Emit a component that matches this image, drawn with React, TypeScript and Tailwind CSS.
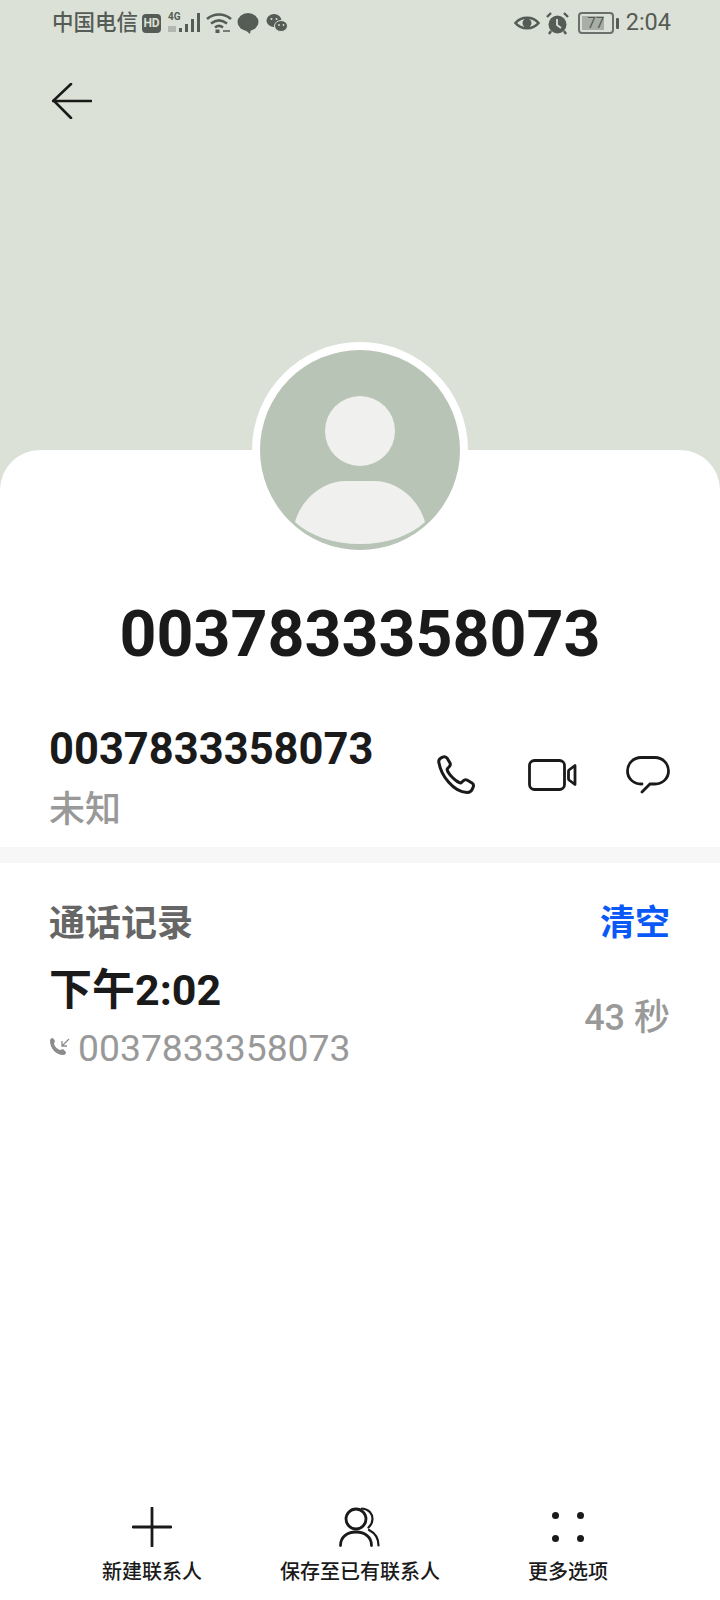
const sans = "font-['Roboto','Noto_Sans_CJK_SC',sans-serif]";

function StatusBar() {
  return (
    <div className="flex h-[46px] items-center justify-between pl-[52px] pr-[49px] text-[#555b55]">
      <div className="flex items-center">
        <span className="text-[21.5px] font-medium leading-none">中国电信</span>
        {/* HD badge */}
        <span className="ml-[4px] flex h-[19px] w-[19px] items-center justify-center rounded-[4px] bg-[#555b55] text-[12px] font-bold leading-none text-[#dbe1d7]">
          HD
        </span>
        {/* 4G signal */}
        <svg className="ml-[7px]" width="33" height="24" viewBox="0 0 33 24" fill="#555b55">
          <text x="0" y="9" fontSize="10" fontWeight="700" fontFamily="Roboto">4G</text>
          <rect x="0" y="15" width="8" height="6" opacity="0.3" />
          <rect x="11" y="17" width="3" height="4" />
          <rect x="17" y="13" width="3" height="8" />
          <rect x="23" y="8" width="3" height="13" />
          <rect x="29" y="2" width="3" height="19" />
        </svg>
        {/* wifi */}
        <svg className="ml-[5px]" width="26" height="22" viewBox="0 0 26 22" fill="none" stroke="#555b55" strokeWidth="2.600">
          <path d="M1 7c7-6 17-6 24 0" />
          <path d="M5 11.500c5-4 11-4 16 0" />
          <path d="M9 15.500c2.500-2 5.500-2 8 0" />
          <rect x="9.500" y="17.500" width="4" height="3.500" fill="#555b55" stroke="none" />
          <path d="M17 19h7" strokeWidth="1.500" />
        </svg>
        {/* message bubble */}
        <svg className="ml-[5px]" width="22" height="22" viewBox="0 0 22 22" fill="#555b55">
          <ellipse cx="11" cy="10" rx="10.500" ry="9" />
          <path d="M7 17l6 5 1-6z" />
        </svg>
        {/* wechat */}
        <svg className="ml-[7px]" width="22" height="20" viewBox="0 0 22 20" fill="#555b55">
          <ellipse cx="8" cy="7.500" rx="7.500" ry="6.500" />
          <ellipse cx="15" cy="13" rx="6.500" ry="5.500" stroke="#dbe1d7" strokeWidth="1" />
          <circle cx="5.500" cy="6" r="1" fill="#dbe1d7" />
          <circle cx="10.500" cy="6" r="1" fill="#dbe1d7" />
          <circle cx="13" cy="12" r="0.900" fill="#dbe1d7" />
          <circle cx="17.500" cy="12" r="0.900" fill="#dbe1d7" />
        </svg>
      </div>
      <div className="flex items-center">
        {/* eye */}
        <svg width="26" height="18" viewBox="0 0 26 18" fill="none" stroke="#555b55" strokeWidth="2.600">
          <path d="M1.500 9C7 2 19 2 24.500 9 19 16 7 16 1.500 9z" />
          <circle cx="13" cy="9" r="4.500" fill="#555b55" stroke="none" />
        </svg>
        {/* alarm */}
        <svg className="ml-[6px]" width="23" height="23" viewBox="0 0 23 23" fill="#555b55">
          <circle cx="11.500" cy="12.500" r="9" />
          <path d="M1 5l4-4M22 5l-4-4" stroke="#555b55" strokeWidth="2.400" />
          <path d="M3 22l2-3M20 22l-2-3" stroke="#555b55" strokeWidth="2.400" />
          <path d="M11 7v6l4 3" fill="none" stroke="#dbe1d7" strokeWidth="1.800" />
        </svg>
        {/* battery */}
        <div className="relative ml-[9px] flex h-[22px] w-[36px] items-center rounded-[4px] border-2 border-[#6b706a] p-[2px]">
          <div className="h-full w-[22px] bg-[#a9aea6]" />
          <span className="absolute inset-0 flex items-center justify-center text-[15px] leading-none text-[#555b55]">
            77
          </span>
        </div>
        <div className="ml-[2px] h-[11px] w-[3px] rounded-[1px] bg-[#555b55]" />
        <span className="ml-[7px] text-[23.5px] leading-none">2:04</span>
      </div>
    </div>
  );
}

export default function App() {
  return (
    <div className={`${sans} flex h-[1600px] w-[720px] flex-col overflow-hidden bg-white`}>
      {/* Header band */}
      <div className="h-[488px] shrink-0 bg-[#dbe1d7]">
        <StatusBar />
        <button className="ml-[52px] mt-[37px] block">
          <svg width="40" height="36" viewBox="0 0 40 36" fill="none" stroke="#1a1a1a" strokeWidth="2.600" strokeLinecap="round">
            <path d="M1 18h38" />
            <path d="M19 1L1.500 17.500 19 35" />
          </svg>
        </button>
      </div>

      {/* White sheet */}
      <div className="-mt-[38px] flex flex-1 flex-col rounded-t-[40px] bg-white">
        <div className="-mt-[108px] flex justify-center">
          <div className="flex h-[216px] w-[216px] items-center justify-center rounded-full bg-white">
            <svg width="200" height="200" viewBox="0 0 200 200">
              <circle cx="100" cy="100" r="100" fill="#b8c4b5" />
              <circle cx="100" cy="81" r="35" fill="#f0f1ef" />
              <path d="M35 172c7-25 30-41 50-41h30c20 0 43 16 50 41-15 14-38 22-65 22s-50-8-65-22z" fill="#f0f1ef" />
            </svg>
          </div>
        </div>

        <h1 className="mt-[36px] text-center text-[64.500px] font-bold leading-[80px] text-[#1a1a1a]">
          0037833358073
        </h1>

        {/* Number row */}
        <div className="mt-[50px] flex items-start justify-between pl-[49px] pr-[50px]">
          <div>
            <div className="text-[43.5px] font-bold leading-[52px] text-[#1a1a1a]">0037833358073</div>
            <div className="mt-[12px] text-[36px] font-medium leading-[44px] text-[#999999]">未知</div>
          </div>
          <div className="mt-[30px] flex items-center">
            <svg width="42" height="42" viewBox="0 0 42 42" fill="none" stroke="#1a1a1a" strokeWidth="3" strokeLinejoin="round">
              <path d="M3 9c-1-3 1-5 4-6 2-1 3 0 4 1l3 5c1 2 0 3-1 4l-1.500 1.500c-1 1 1 5 5 9s8 6 9 5l1.500-1.500c1-1 2-2 4-1l5 3c1.500 1 2 2.500 1 4.500-1 3-3 5-6 5C17 38 5 21 3 9z" />
            </svg>
            <svg className="ml-[50px]" width="49" height="32" viewBox="0 0 49 32" fill="none" stroke="#1a1a1a" strokeWidth="2.800" strokeLinejoin="round">
              <rect x="1.500" y="1.500" width="35" height="29" rx="5" />
              <path d="M41 11l6-4.500v19l-6-4.500c-.500-.500-.500-1-.500-1.500v-7c0-.500 0-1 .500-1.500z" />
            </svg>
            <svg className="ml-[49px]" width="44" height="38" viewBox="0 0 44 38" fill="none" stroke="#1a1a1a" strokeWidth="2.800" strokeLinecap="round">
              <path d="M16 28h-1C7 28 1.500 22 1.500 15S7 1.500 15 1.500h14C37 1.500 42.500 8 42.500 15S37 28 29 28h-5L16 36" />
            </svg>
          </div>
        </div>

        <div className="mt-[15px] h-[16px] bg-[#f7f7f7]" />

        {/* Call log */}
        <div className="flex items-center justify-between pl-[49px] pr-[50px] pt-[39px]">
          <span className="text-[36px] font-bold leading-[44px] text-[#666666]">通话记录</span>
          <span className="text-[35px] font-bold leading-[44px] text-[#0a59f7]">清空</span>
        </div>
        <div className="flex items-center justify-between pl-[49px] pr-[50px] pt-[18px]">
          <div>
            <div className="text-[43px] font-bold leading-[52px] text-[#1a1a1a]">下午2:02</div>
            <div className="mt-[10px] flex items-center text-[#999999]">
              <svg width="22" height="22" viewBox="0 0 22 22" fill="#8c8c8c">
                <path d="M1 4c0-2 1-3 3-3l2 3-1 3c1 3 3 5 6 6l3-1 3 3c0 2-1 3-3 3C7 18 1 11 1 4z" />
                <path d="M20 2l-7 7M13 4v5h5" fill="none" stroke="#8c8c8c" strokeWidth="1.300" />
              </svg>
              <span className="ml-[7px] text-[37.3px] leading-[44px]">0037833358073</span>
            </div>
          </div>
          <span className="mt-[2px] text-[36px] font-medium leading-[44px] text-[#999999]">43 秒</span>
        </div>

        {/* Bottom actions */}
        <div className="mt-auto grid grid-cols-3 px-[48px] pb-[14px]">
          <div className="flex flex-col items-center">
            <svg width="40" height="40" viewBox="0 0 40 40" fill="none" stroke="#1a1a1a" strokeWidth="2.800" strokeLinecap="round">
              <path d="M20 1v38M1 20h38" />
            </svg>
            <span className="mt-[11px] text-[20px] font-medium leading-[28px] text-[#1a1a1a]">新建联系人</span>
          </div>
          <div className="flex flex-col items-center">
            <svg width="42" height="40" viewBox="0 0 42 40" fill="none" stroke="#1a1a1a" strokeWidth="2.800" strokeLinecap="round">
              <circle cx="17" cy="12" r="10" />
              <path d="M1.500 38.500C1.500 30 8 25 17 25s15.500 5 15.500 13.500" />
              <path d="M23 1.500C30 2 33.500 7 33.500 12c0 4-2 6.500-4 8.500M30 23c6 3 9.500 9 9.500 15.500" strokeWidth="2.200" />
            </svg>
            <span className="mt-[11px] text-[20px] font-medium leading-[28px] text-[#1a1a1a]">保存至已有联系人</span>
          </div>
          <div className="flex flex-col items-center">
            <div className="grid h-[40px] w-[32px] grid-cols-2 content-center gap-x-[17px] gap-y-[16px]">
              <span className="h-[7px] w-[7px] rounded-full bg-[#1a1a1a]" />
              <span className="h-[7px] w-[7px] rounded-full bg-[#1a1a1a]" />
              <span className="h-[7px] w-[7px] rounded-full bg-[#1a1a1a]" />
              <span className="h-[7px] w-[7px] rounded-full bg-[#1a1a1a]" />
            </div>
            <span className="mt-[11px] text-[20px] font-medium leading-[28px] text-[#1a1a1a]">更多选项</span>
          </div>
        </div>
      </div>
    </div>
  );
}
